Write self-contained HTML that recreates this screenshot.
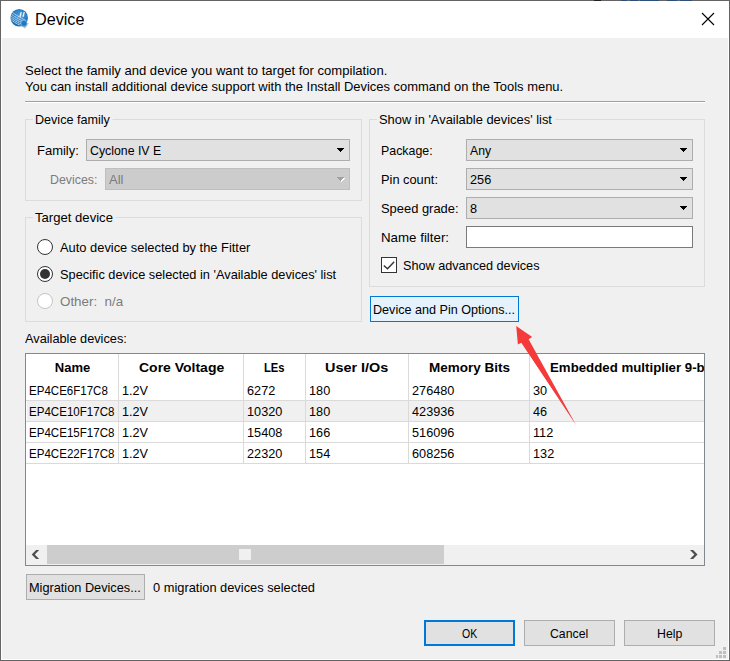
<!DOCTYPE html>
<html>
<head>
<meta charset="utf-8">
<title>Device</title>
<style>
html,body{margin:0;padding:0;}
body{width:730px;height:661px;overflow:hidden;background:#f0f0f0;font-family:"Liberation Sans",sans-serif;font-size:13px;color:#000;position:relative;}
#win{position:absolute;left:0;top:0;width:730px;height:661px;box-sizing:border-box;border:1px solid #646464;background:#f0f0f0;}
#titlebar{position:absolute;left:1px;top:1px;width:728px;height:37px;background:#fff;}
.t{position:absolute;white-space:nowrap;line-height:16px;height:16px;font-size:13px;color:#000;}
.dis{color:#7c7c7c;}
.b{font-weight:bold;}
.grp{position:absolute;box-sizing:border-box;border:1px solid #dcdcdc;}
.gl{background:#f0f0f0;padding:0;}
.combo{position:absolute;box-sizing:border-box;height:22px;border:1px solid #adadad;background:#e1e1e1;}
.combo.off{background:#cccccc;border-color:#bfbfbf;}
.arrs{position:absolute;display:block;}
.btn{position:absolute;box-sizing:border-box;height:26px;border:1px solid #adadad;background:#e1e1e1;}
.radio{position:absolute;box-sizing:border-box;width:16px;height:16px;border-radius:50%;border:1px solid #333;background:#fff;}
.radio.off{border-color:#c4c4c4;}
.radio .dot{position:absolute;left:2px;top:2px;width:10px;height:10px;border-radius:50%;background:#333;}
.vl{position:absolute;width:1px;background:#dadada;}
.hl{position:absolute;height:1px;background:#dadada;}
/*FIT*/
#ttl{transform:scaleX(1.0097);transform-origin:0 0;margin-left:0.00px;}
#l1{transform:scaleX(1.0047);transform-origin:0 0;margin-left:-0.20px;}
#l2{transform:scaleX(0.9956);transform-origin:0 0;margin-left:0.00px;}
#g1{transform:scaleX(0.9692);transform-origin:0 0;margin-left:-0.30px;}
#fam{transform:scaleX(0.9991);transform-origin:0 0;margin-left:0.35px;}
#cyc{transform:scaleX(0.9479);transform-origin:0 0;margin-left:-0.18px;}
#devs{transform:scaleX(0.9506);transform-origin:0 0;margin-left:0.14px;}
#all{transform:scaleX(1.0000);transform-origin:0 0;margin-left:0.00px;}
#g2{transform:scaleX(1.0080);transform-origin:0 0;margin-left:0.30px;}
#r1{transform:scaleX(0.9904);transform-origin:0 0;margin-left:0.00px;}
#r2{transform:scaleX(0.9836);transform-origin:0 0;margin-left:0.00px;}
#r3{transform:scaleX(1.0292);transform-origin:0 0;margin-left:0.45px;}
#g3{transform:scaleX(0.9908);transform-origin:0 0;margin-left:-0.45px;}
#pkg{transform:scaleX(0.9526);transform-origin:0 0;margin-left:0.05px;}
#any{transform:scaleX(0.9405);transform-origin:0 0;margin-left:0.00px;}
#pin{transform:scaleX(0.9850);transform-origin:0 0;margin-left:0.02px;}
#n256{transform:scaleX(0.9770);transform-origin:0 0;margin-left:0.10px;}
#spd{transform:scaleX(0.9930);transform-origin:0 0;margin-left:0.02px;}
#n8{transform:scaleX(0.9770);transform-origin:0 0;margin-left:0.10px;}
#nf{transform:scaleX(1.0235);transform-origin:0 0;margin-left:-0.45px;}
#adv{transform:scaleX(0.9733);transform-origin:0 0;margin-left:0.44px;}
#dpo{transform:scaleX(0.9685);transform-origin:0 0;margin-left:-0.18px;}
#avl{transform:scaleX(0.9806);transform-origin:0 0;margin-left:0.00px;}
#h1{transform:scaleX(1.0000);transform-origin:0 0;margin-left:-0.24px;}
#h2{transform:scaleX(1.0754);transform-origin:0 0;margin-left:0.10px;}
#h3{transform:scaleX(0.8598);transform-origin:0 0;margin-left:0.00px;}
#h4{transform:scaleX(1.1089);transform-origin:0 0;margin-left:-1.05px;}
#h5{transform:scaleX(1.0377);transform-origin:0 0;margin-left:-0.15px;}
#a1{transform:scaleX(0.8872);transform-origin:0 0;margin-left:-0.14px;}
#b1{transform:scaleX(0.9700);transform-origin:0 0;margin-left:-0.10px;}
#c1{transform:scaleX(0.9770);transform-origin:0 0;margin-left:0.20px;}
#d1{transform:scaleX(0.9770);transform-origin:0 0;margin-left:-0.50px;}
#e1{transform:scaleX(0.9770);transform-origin:0 0;margin-left:0.10px;}
#a2{transform:scaleX(0.8886);transform-origin:0 0;margin-left:-0.14px;}
#b2{transform:scaleX(0.9700);transform-origin:0 0;margin-left:-0.10px;}
#c2{transform:scaleX(0.9770);transform-origin:0 0;margin-left:0.20px;}
#d2{transform:scaleX(0.9770);transform-origin:0 0;margin-left:-0.50px;}
#e2{transform:scaleX(0.9770);transform-origin:0 0;margin-left:0.10px;}
#a3{transform:scaleX(0.8886);transform-origin:0 0;margin-left:-0.14px;}
#b3{transform:scaleX(0.9700);transform-origin:0 0;margin-left:-0.10px;}
#c3{transform:scaleX(0.9770);transform-origin:0 0;margin-left:0.20px;}
#d3{transform:scaleX(0.9770);transform-origin:0 0;margin-left:-0.50px;}
#e3{transform:scaleX(0.9770);transform-origin:0 0;margin-left:0.10px;}
#a4{transform:scaleX(0.8886);transform-origin:0 0;margin-left:-0.14px;}
#b4{transform:scaleX(0.9700);transform-origin:0 0;margin-left:-0.10px;}
#c4{transform:scaleX(0.9770);transform-origin:0 0;margin-left:0.20px;}
#d4{transform:scaleX(0.9770);transform-origin:0 0;margin-left:-0.50px;}
#e4{transform:scaleX(0.9770);transform-origin:0 0;margin-left:0.10px;}
#mig{transform:scaleX(0.9791);transform-origin:0 0;margin-left:0.30px;}
#mg0{transform:scaleX(0.9877);transform-origin:0 0;margin-left:0.00px;}
#ok{transform:scaleX(0.8100);transform-origin:0 0;margin-left:0.58px;}
#can{transform:scaleX(0.9446);transform-origin:0 0;margin-left:-0.12px;}
#hlp{transform:scaleX(0.9467);transform-origin:0 0;margin-left:0.04px;}
#f1{transform:scaleX(0.9770);transform-origin:0 0;margin-left:-0.50px;}
#f2{transform:scaleX(0.9770);transform-origin:0 0;margin-left:-0.50px;}
#f3{transform:scaleX(0.9770);transform-origin:0 0;margin-left:-0.50px;}
#f4{transform:scaleX(0.9770);transform-origin:0 0;margin-left:-0.50px;}
#h6{transform:scaleX(1.0200);transform-origin:0 0;margin-left:-0.10px;}
/*ENDFIT*/
</style>
</head>
<body>
<div id="win"></div>
<div id="titlebar"></div>
<div style="position:absolute;left:1px;top:38px;width:1px;height:622px;background:#fff;"></div>
<div style="position:absolute;left:728px;top:38px;width:1px;height:622px;background:#fff;"></div>
<div style="position:absolute;left:1px;top:659px;width:728px;height:1px;background:#fff;"></div>

<div style="position:absolute;left:594px;top:0;width:7px;height:1px;background:#222;"></div>
<div style="position:absolute;left:621px;top:0;width:6px;height:1px;background:#2b4f78;"></div>
<div style="position:absolute;left:630px;top:0;width:8px;height:1px;background:#2b4f78;"></div>
<div style="position:absolute;left:640px;top:0;width:19px;height:1px;background:#2b4f78;"></div>
<div style="position:absolute;left:667px;top:0;width:10px;height:1px;background:#2b4f78;"></div>
<div style="position:absolute;left:680px;top:0;width:12px;height:1px;background:#2b4f78;"></div>
<!-- title icon -->
<svg style="position:absolute;left:6px;top:5px" width="28" height="28" viewBox="6 5 28 28">
  <defs>
    <radialGradient id="gg" cx="0.55" cy="0.4" r="0.65">
      <stop offset="0" stop-color="#5aa2da"/>
      <stop offset="0.55" stop-color="#2a80c6"/>
      <stop offset="1" stop-color="#1767ad"/>
    </radialGradient>
    <clipPath id="gc"><circle cx="19.2" cy="17.7" r="8.8"/></clipPath>
  </defs>
  <path d="M19 24.6 L28.8 23 L25 28.6 Z" fill="#b4b8bd"/>
  <circle cx="19.2" cy="17.7" r="8.8" fill="url(#gg)"/>
  <g clip-path="url(#gc)" stroke="#ffffff" stroke-opacity="0.85" stroke-width="0.95" fill="none" stroke-dasharray="1.5 0.5">
    <path d="M11.6 11.9 Q18 16.5 26 20.6"/>
    <path d="M10.4 13.4 Q16.5 18.2 24.6 21.9"/>
    <path d="M9.8 15.0 Q15.5 19.9 23.2 23.2"/>
    <path d="M9.8 16.8 Q14.8 21.4 21.8 24.3"/>
    <path d="M10 18.7 Q14.2 22.8 20.4 25.3"/>
  </g>
  <path d="M19.3 16.8 L20.6 11.9 L21.8 11.9 L20.9 16.8 Z M22.3 16.8 L23.6 11.9 L24.8 11.9 L23.9 16.8 Z" fill="#eef5fb"/>
  <circle cx="24" cy="23.4" r="3.0" fill="#1b79c6" stroke="#9cc6e8" stroke-width="0.5"/>
</svg>
<span class="t" id="ttl" style="left:35px;top:10.1px;font-size:16px;line-height:20px;height:20px;">Device</span>
<!-- close X -->
<svg style="position:absolute;left:700px;top:11px" width="16" height="16" viewBox="0 0 16 16">
  <path d="M2 2 L14 14 M14 2 L2 14" stroke="#000" stroke-width="1.1" fill="none"/>
</svg>

<!-- intro -->
<span class="t" id="l1" style="left:25px;top:63px;">Select the family and device you want to target for compilation.</span>
<span class="t" id="l2" style="left:25px;top:79px;">You can install additional device support with the Install Devices command on the Tools menu.</span>
<div style="position:absolute;left:25px;top:101px;width:680px;height:1px;background:#a0a0a0;"></div>
<div style="position:absolute;left:25px;top:102px;width:680px;height:1px;background:#fff;"></div>

<!-- Device family group -->
<div class="grp" style="left:25px;top:119px;width:337px;height:82px;"></div>
<span class="t gl" id="g1" style="left:33px;top:112px;padding:0 3px 0 2px;">Device family</span>
<span class="t" id="fam" style="left:37px;top:143px;">Family:</span>
<div class="combo" style="left:86px;top:139px;width:264px;"><svg class="arrs" style="left:250px;top:8px" width="7" height="4" viewBox="0 0 7 4" shape-rendering="crispEdges"><path d="M0 0h7v1h-1v1h-1v1h-1v1h-1v-1h-1v-1h-1v-1h-1z" fill="#000"/></svg></div>
<span class="t" id="cyc" style="left:90px;top:143px;">Cyclone IV E</span>
<span class="t dis" id="devs" style="left:50px;top:172px;">Devices:</span>
<div class="combo off" style="left:105px;top:168px;width:245px;">
  <svg class="arrs" style="left:232px;top:9px" width="7" height="4" viewBox="0 0 7 4" shape-rendering="crispEdges"><path d="M0 0h7v1h-1v1h-1v1h-1v1h-1v-1h-1v-1h-1v-1h-1z" fill="#fff"/></svg>
  <svg class="arrs" style="left:231px;top:8px" width="7" height="4" viewBox="0 0 7 4" shape-rendering="crispEdges"><path d="M0 0h7v1h-1v1h-1v1h-1v1h-1v-1h-1v-1h-1v-1h-1z" fill="#a0a0a0"/></svg>
</div>
<span class="t dis" id="all" style="left:109px;top:172px;">All</span>

<!-- Target device group -->
<div class="grp" style="left:25px;top:217px;width:337px;height:105px;"></div>
<span class="t gl" id="g2" style="left:33px;top:210px;padding:0 3px 0 2px;">Target device</span>
<div class="radio" style="left:37px;top:239px;"></div>
<span class="t" id="r1" style="left:60px;top:240px;">Auto device selected by the Fitter</span>
<div class="radio" style="left:37px;top:266px;"><div class="dot"></div></div>
<span class="t" id="r2" style="left:60px;top:267px;">Specific device selected in 'Available devices' list</span>
<div class="radio off" style="left:37px;top:293px;"></div>
<span class="t dis" id="r3" style="left:60px;top:294px;">Other:&nbsp; n/a</span>

<!-- Show in group -->
<div class="grp" style="left:369px;top:119px;width:336px;height:168px;"></div>
<span class="t gl" id="g3" style="left:377px;top:112px;padding:0 3px 0 2px;">Show in 'Available devices' list</span>
<span class="t" id="pkg" style="left:381px;top:143px;">Package:</span>
<div class="combo" style="left:466px;top:139px;width:227px;"><svg class="arrs" style="left:213px;top:8px" width="7" height="4" viewBox="0 0 7 4" shape-rendering="crispEdges"><path d="M0 0h7v1h-1v1h-1v1h-1v1h-1v-1h-1v-1h-1v-1h-1z" fill="#000"/></svg></div>
<span class="t" id="any" style="left:470px;top:143px;">Any</span>
<span class="t" id="pin" style="left:381px;top:172px;">Pin count:</span>
<div class="combo" style="left:466px;top:168px;width:227px;"><svg class="arrs" style="left:213px;top:8px" width="7" height="4" viewBox="0 0 7 4" shape-rendering="crispEdges"><path d="M0 0h7v1h-1v1h-1v1h-1v1h-1v-1h-1v-1h-1v-1h-1z" fill="#000"/></svg></div>
<span class="t" id="n256" style="left:470px;top:172px;">256</span>
<span class="t" id="spd" style="left:381px;top:201px;">Speed grade:</span>
<div class="combo" style="left:466px;top:197px;width:227px;"><svg class="arrs" style="left:213px;top:8px" width="7" height="4" viewBox="0 0 7 4" shape-rendering="crispEdges"><path d="M0 0h7v1h-1v1h-1v1h-1v1h-1v-1h-1v-1h-1v-1h-1z" fill="#000"/></svg></div>
<span class="t" id="n8" style="left:470px;top:201px;">8</span>
<span class="t" id="nf" style="left:381px;top:230px;">Name filter:</span>
<div style="position:absolute;box-sizing:border-box;left:466px;top:226px;width:227px;height:22px;border:1px solid #7a7a7a;background:#fff;"></div>
<div style="position:absolute;box-sizing:border-box;left:381px;top:257px;width:16px;height:16px;border:1px solid #333;background:#fff;"></div>
<svg style="position:absolute;left:381px;top:257px" width="16" height="16" viewBox="0 0 16 16"><path d="M2.8 8.4 L6.5 11.8 L13.2 4.8" stroke="#333" stroke-width="1.4" fill="none"/></svg>
<span class="t" id="adv" style="left:403px;top:258px;">Show advanced devices</span>

<!-- Device and Pin Options button -->
<div class="btn" style="left:370px;top:296px;width:149px;border-color:#0078d7;background:#e5f1fb;"></div>
<span class="t" id="dpo" style="left:373px;top:302px;">Device and Pin Options...</span>

<!-- Available devices -->
<span class="t" id="avl" style="left:25px;top:331px;">Available devices:</span>
<div id="tbl" style="position:absolute;box-sizing:border-box;left:25px;top:353px;width:680px;height:213px;border:1px solid #828790;background:#fff;overflow:hidden;"></div>
<!-- alt row -->
<div style="position:absolute;left:27px;top:401px;width:677px;height:20px;background:#f0f0f0;"></div>
<!-- grid -->
<div class="hl" style="left:26px;top:400px;width:678px;"></div>
<div class="hl" style="left:26px;top:421px;width:678px;"></div>
<div class="hl" style="left:26px;top:442px;width:678px;"></div>
<div class="hl" style="left:26px;top:463px;width:678px;"></div>
<div class="vl" style="left:118px;top:354px;height:110px;"></div>
<div class="vl" style="left:243px;top:354px;height:110px;"></div>
<div class="vl" style="left:305px;top:354px;height:110px;"></div>
<div class="vl" style="left:408px;top:354px;height:110px;"></div>
<div class="vl" style="left:529px;top:354px;height:110px;"></div>
<!-- headers -->
<span class="t b" id="h1" style="left:55px;top:360px;">Name</span>
<span class="t b" id="h2" style="left:139px;top:360px;">Core Voltage</span>
<span class="t b" id="h3" style="left:264px;top:360px;">LEs</span>
<span class="t b" id="h4" style="left:326px;top:360px;">User I/Os</span>
<span class="t b" id="h5" style="left:429px;top:360px;">Memory Bits</span>
<div style="position:absolute;left:530px;top:354px;width:174px;height:26px;overflow:hidden;"><span class="t b" id="h6" style="left:20px;top:6px;">Embedded multiplier 9-bit elements</span></div>
<!-- rows -->
<span class="t" id="a1" style="left:29px;top:383px;">EP4CE6F17C8</span>
<span class="t" id="b1" style="left:122px;top:383px;">1.2V</span>
<span class="t" id="c1" style="left:247px;top:383px;">6272</span>
<span class="t" id="d1" style="left:309px;top:383px;">180</span>
<span class="t" id="e1" style="left:412px;top:383px;">276480</span>
<span class="t" id="f1" style="left:533px;top:383px;">30</span>

<span class="t" id="a2" style="left:29px;top:404px;">EP4CE10F17C8</span>
<span class="t" id="b2" style="left:122px;top:404px;">1.2V</span>
<span class="t" id="c2" style="left:247px;top:404px;">10320</span>
<span class="t" id="d2" style="left:309px;top:404px;">180</span>
<span class="t" id="e2" style="left:412px;top:404px;">423936</span>
<span class="t" id="f2" style="left:533px;top:404px;">46</span>

<span class="t" id="a3" style="left:29px;top:425px;">EP4CE15F17C8</span>
<span class="t" id="b3" style="left:122px;top:425px;">1.2V</span>
<span class="t" id="c3" style="left:247px;top:425px;">15408</span>
<span class="t" id="d3" style="left:309px;top:425px;">166</span>
<span class="t" id="e3" style="left:412px;top:425px;">516096</span>
<span class="t" id="f3" style="left:533px;top:425px;">112</span>

<span class="t" id="a4" style="left:29px;top:446px;">EP4CE22F17C8</span>
<span class="t" id="b4" style="left:122px;top:446px;">1.2V</span>
<span class="t" id="c4" style="left:247px;top:446px;">22320</span>
<span class="t" id="d4" style="left:309px;top:446px;">154</span>
<span class="t" id="e4" style="left:412px;top:446px;">608256</span>
<span class="t" id="f4" style="left:533px;top:446px;">132</span>

<!-- scrollbar -->
<div style="position:absolute;left:26px;top:545px;width:678px;height:20px;background:#f0f0f0;"></div>
<div style="position:absolute;left:47px;top:545px;width:397px;height:19px;background:#cdcdcd;"></div>
<div style="position:absolute;left:239px;top:549px;width:12px;height:11px;background:#f0f0f0;"></div>
<svg style="position:absolute;left:28px;top:546px" width="16" height="16" viewBox="28 546 16 16"><path d="M39.2 550 L36.1 550 L31.7 554.5 L36.1 559 L39.2 559 L34.8 554.5 Z" fill="#4d4d4d"/></svg>
<svg style="position:absolute;left:686px;top:546px" width="16" height="16" viewBox="686 546 16 16"><path d="M690 550 L693.1 550 L697.5 554.5 L693.1 559 L690 559 L694.4 554.5 Z" fill="#4d4d4d"/></svg>

<!-- Migration -->
<div class="btn" style="left:26px;top:574px;width:119px;"></div>
<span class="t" id="mig" style="left:29px;top:580px;">Migration Devices...</span>
<span class="t" id="mg0" style="left:153px;top:580px;">0 migration devices selected</span>

<!-- bottom buttons -->
<div class="btn" style="left:424px;top:620px;width:91px;border:2px solid #0078d7;"></div>
<span class="t" id="ok" style="left:461px;top:626px;">OK</span>
<div class="btn" style="left:524px;top:620px;width:91px;"></div>
<span class="t" id="can" style="left:550px;top:626px;">Cancel</span>
<div class="btn" style="left:624px;top:620px;width:91px;"></div>
<span class="t" id="hlp" style="left:657px;top:626px;">Help</span>

<!-- size grip -->
<svg style="position:absolute;left:715px;top:646px" width="13" height="13" viewBox="0 0 13 13" shape-rendering="crispEdges">
  <g fill="#bfbfbf">
    <rect x="8" y="1" width="3" height="3"/>
    <rect x="4" y="5" width="3" height="3"/><rect x="8" y="5" width="3" height="3"/>
    <rect x="1" y="9" width="2" height="3"/><rect x="4" y="9" width="3" height="3"/><rect x="8" y="9" width="3" height="3"/>
  </g>
</svg>

<!-- red arrow -->
<svg style="position:absolute;left:500px;top:315px" width="100" height="120" viewBox="500 315 100 120">
  <path d="M516.2 326.0 L532.2 337.0 L528.6 339.2 L576.2 425.2 L521.3 342.8 L517.9 344.5 Z" fill="#f53a3a"/>
</svg>
</body>
</html>
